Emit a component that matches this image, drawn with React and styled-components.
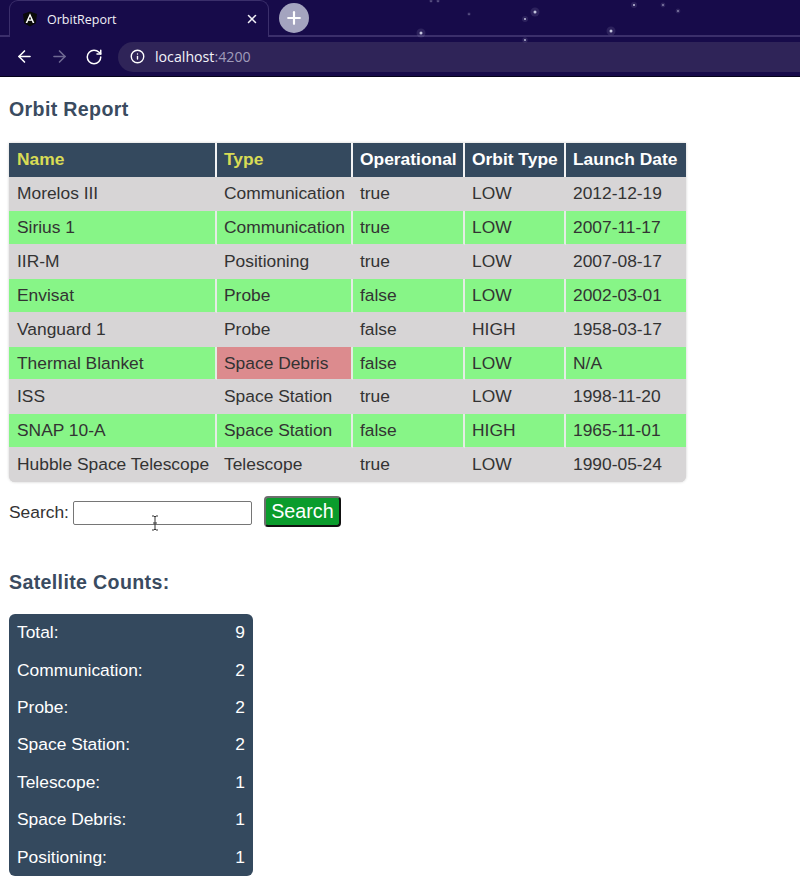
import React from "react";
import styled, { createGlobalStyle } from "styled-components";
import { ArrowLeft, ArrowRight, RotateCw, Info, Plus, X } from "lucide-react";

const Global = createGlobalStyle`
  html, body { margin: 0; padding: 0; background: #fff; }
  body { font-family: "Liberation Sans", Arial, sans-serif; overflow: hidden; }
`;

const Page = styled.div`
  width: 800px;
  height: 894px;
  overflow: hidden;
`;

const Chrome = styled.header`
  position: relative;
  height: 76px;
  background: #170b4a;
  border-bottom: 1px solid #05021a;
  font-family: "Open Sans", "Liberation Sans", sans-serif;
`;

const Stars = styled.svg`
  position: absolute;
  inset: 0;
  pointer-events: none;
`;

const TabStrip = styled.div`
  display: flex;
  align-items: flex-start;
  height: 35px;
  padding-left: 9px;
  border-bottom: 2px solid #3b2f6b;
  box-sizing: content-box;
`;

const Tab = styled.div`
  position: relative;
  display: flex;
  align-items: center;
  box-sizing: border-box;
  width: 260px;
  height: 37px;
  padding: 0 9px 0 12px;
  gap: 9px;
  background: #170b4a;
  border: 1px solid #3b2f6b;
  border-bottom: none;
  border-radius: 9px 9px 0 0;
  color: #f1f0f6;
  font-size: 12.5px;
`;

const TabTitle = styled.span`
  flex: 1;
`;

const NewTab = styled.div`
  display: flex;
  align-items: center;
  justify-content: center;
  width: 30px;
  height: 30px;
  margin: 3px 0 0 10px;
  border-radius: 50%;
  background: #a4a4bf;
  color: #fff;
`;

const Toolbar = styled.div`
  display: flex;
  align-items: center;
  height: 39px;
  padding-left: 15px;
  color: #fff;
`;

const NavButton = styled.span`
  display: flex;
  width: 20px;
  margin-right: ${(p) => p.$gap}px;
  color: ${(p) => (p.$dim ? "#6f6a93" : "#fff")};
`;

const Omnibox = styled.div`
  display: flex;
  flex: 1;
  align-items: center;
  gap: 10px;
  height: 30px;
  margin-left: 10px;
  padding-left: 12px;
  border-radius: 15px 0 0 15px;
  background: #2f2458;
  font-size: 14.2px;
`;

const Host = styled.span`
  color: #f3f2f8;
`;

const Port = styled.span`
  color: #a09cba;
`;

const Content = styled.main`
  padding: 0 9px;
  color: #333;
`;

const Heading = styled.h2`
  margin: 0;
  font-size: 19.6px;
  line-height: 24px;
  font-weight: 700;
  letter-spacing: 0.35px;
  color: #3a4b60;
`;

const ReportHeading = styled(Heading)`
  padding-top: 20px;
`;

const Table = styled.table`
  width: 677px;
  margin-top: 22px;
  border-collapse: separate;
  border-spacing: 0;
  table-layout: fixed;
  border-radius: 0 0 6px 6px;
  overflow: hidden;
  background: #d7d5d6;
  box-shadow: 0 0 3px rgba(0, 0, 0, 0.2);
  font-size: 17.4px;
`;

const Th = styled.th`
  height: 34px;
  padding: 0 0 2px 7px;
  box-sizing: border-box;
  text-align: left;
  font-weight: 700;
  font-size: 17.4px;
  white-space: nowrap;
  background: #34495e;
  color: ${(p) => (p.$accent ? "#d9dc55" : "#fff")};
  border-right: 2px solid #f2f3f4;
  &:first-child { padding-left: 8px; }
  &:last-child { border-right: none; }
`;

const Td = styled.td`
  height: ${(p) => (p.$short ? 33 : 34)}px;
  padding: 0 0 0 7px;
  box-sizing: border-box;
  white-space: nowrap;
  background: ${(p) => p.$bg};
  color: #333;
  border-right: 2px solid ${(p) => (p.$bg === "#d7d5d6" ? "#d7d5d6" : "#e4ece4")};
  border-bottom: 1px solid #d7d5d6;
  &:first-child { padding-left: 8px; }
  &:last-child { border-right: none; }
`;

const SearchRow = styled.form`
  position: relative;
  display: flex;
  align-items: center;
  height: 32px;
  margin-top: 14px;
  font-size: 17.4px;
`;

const SearchInput = styled.input`
  box-sizing: border-box;
  width: 179px;
  height: 24px;
  margin: 2px 12px 0 4px;
  padding: 0;
  background: #fff;
  border: 1px solid #767676;
  border-radius: 2px;
`;

const SearchButton = styled.button`
  box-sizing: border-box;
  width: 77px;
  height: 31px;
  padding: 0;
  margin-bottom: 1px;
  background: #0a9c2c;
  color: #fff;
  font-family: inherit;
  font-size: 19.7px;
  border: 2px solid;
  border-color: #6e6e6e #111 #111 #6e6e6e;
  border-radius: 4px;
`;

const Caret = styled.svg`
  position: absolute;
  left: 142px;
  top: 19px;
`;

const CountsHeading = styled(Heading)`
  margin-top: 42px;
`;

const Panel = styled.section`
  width: 244px;
  height: 262px;
  margin-top: 20px;
  padding: 0 8px;
  box-sizing: border-box;
  display: flex;
  flex-direction: column;
  justify-content: space-between;
  background: #34495e;
  border-radius: 6px;
  color: #fff;
  font-size: 17.4px;
`;

const Count = styled.div`
  display: flex;
  align-items: center;
  justify-content: space-between;
  height: 37.4px;
`;

const rows = [
  ["Morelos III", "Communication", "true", "LOW", "2012-12-19"],
  ["Sirius 1", "Communication", "true", "LOW", "2007-11-17"],
  ["IIR-M", "Positioning", "true", "LOW", "2007-08-17"],
  ["Envisat", "Probe", "false", "LOW", "2002-03-01"],
  ["Vanguard 1", "Probe", "false", "HIGH", "1958-03-17"],
  ["Thermal Blanket", "Space Debris", "false", "LOW", "N/A"],
  ["ISS", "Space Station", "true", "LOW", "1998-11-20"],
  ["SNAP 10-A", "Space Station", "false", "HIGH", "1965-11-01"],
  ["Hubble Space Telescope", "Telescope", "true", "LOW", "1990-05-24"],
];

const counts = [
  ["Total:", 9],
  ["Communication:", 2],
  ["Probe:", 2],
  ["Space Station:", 2],
  ["Telescope:", 1],
  ["Space Debris:", 1],
  ["Positioning:", 1],
];

const stars = [
  [535, 12, 1.5], [525, 19, 1], [421, 33, 1.5], [611, 31, 1.5], [634, 5, 1],
  [663, 5, 0.8], [678, 11, 0.8], [469, 14, 0.6], [525, 40, 0.9], [431, 1, 0.6], [438, 1, 0.6],
];

const widths = [208, 136, 112, 101, 120];

const cellColor = (rowIndex, cell) => {
  if (cell === "Space Debris") return "#dc8b8e";
  return rowIndex % 2 ? "#87f587" : "#d7d5d6";
};

export default function App() {
  return (
    <Page>
      <Global />
      <Chrome>
        <Stars width="800" height="76">
          {stars.map(([x, y, r]) => (
            <g key={`${x}-${y}`}>
              <circle cx={x} cy={y} r={r * 3} fill="#cfd0e6" opacity="0.12" />
              <circle cx={x} cy={y} r={r} fill="#c4c5de" />
            </g>
          ))}
        </Stars>
        <TabStrip>
          <Tab>
            <svg width="16" height="16" viewBox="0 0 16 16">
              <path d="M8 0.5 1 3l1.1 9.3L8 15.5l5.9-3.2L15 3z" fill="#0a0a0a" />
              <path d="M8 2.2 3.6 12h1.7l.9-2.2h3.6l.9 2.2h1.7zm0 3.4 1.2 2.8H6.8z" fill="#fff" />
            </svg>
            <TabTitle>OrbitReport</TabTitle>
            <X size={14} strokeWidth={2.6} />
          </Tab>
          <NewTab>
            <Plus size={20} strokeWidth={2.6} />
          </NewTab>
        </TabStrip>
        <Toolbar>
          <NavButton $gap={15}><ArrowLeft size={19} strokeWidth={2} /></NavButton>
          <NavButton $dim $gap={15}><ArrowRight size={19} strokeWidth={2} /></NavButton>
          <NavButton $gap={3}><RotateCw size={18} strokeWidth={2} /></NavButton>
          <Omnibox>
            <Info size={15} strokeWidth={2.2} />
            <span><Host>localhost</Host><Port>:4200</Port></span>
          </Omnibox>
        </Toolbar>
      </Chrome>
      <Content>
        <ReportHeading>Orbit Report</ReportHeading>
        <Table>
          <colgroup>
            {widths.map((w) => <col key={w} width={w} />)}
          </colgroup>
          <thead>
            <tr>
              <Th $accent>Name</Th>
              <Th $accent>Type</Th>
              <Th>Operational</Th>
              <Th>Orbit Type</Th>
              <Th>Launch Date</Th>
            </tr>
          </thead>
          <tbody>
            {rows.map((row, i) => (
              <tr key={row[0]}>
                {row.map((cell, j) => (
                  <Td key={j} $short={i === 5} $bg={cellColor(i, cell)}>{cell}</Td>
                ))}
              </tr>
            ))}
          </tbody>
        </Table>
        <SearchRow>
          <label htmlFor="q">Search:</label>
          <SearchInput id="q" />
          <SearchButton type="button">Search</SearchButton>
          <Caret width="8" height="16" viewBox="0 0 8 16">
            <path d="M1 1h2l1 1 1-1h2M4 2v12M1 15h2l1-1 1 1h2M2 8h4" fill="none" stroke="#333" strokeWidth="1" />
          </Caret>
        </SearchRow>
        <CountsHeading>Satellite Counts:</CountsHeading>
        <Panel>
          {counts.map(([label, value]) => (
            <Count key={label}>
              <span>{label}</span>
              <span>{value}</span>
            </Count>
          ))}
        </Panel>
      </Content>
    </Page>
  );
}
